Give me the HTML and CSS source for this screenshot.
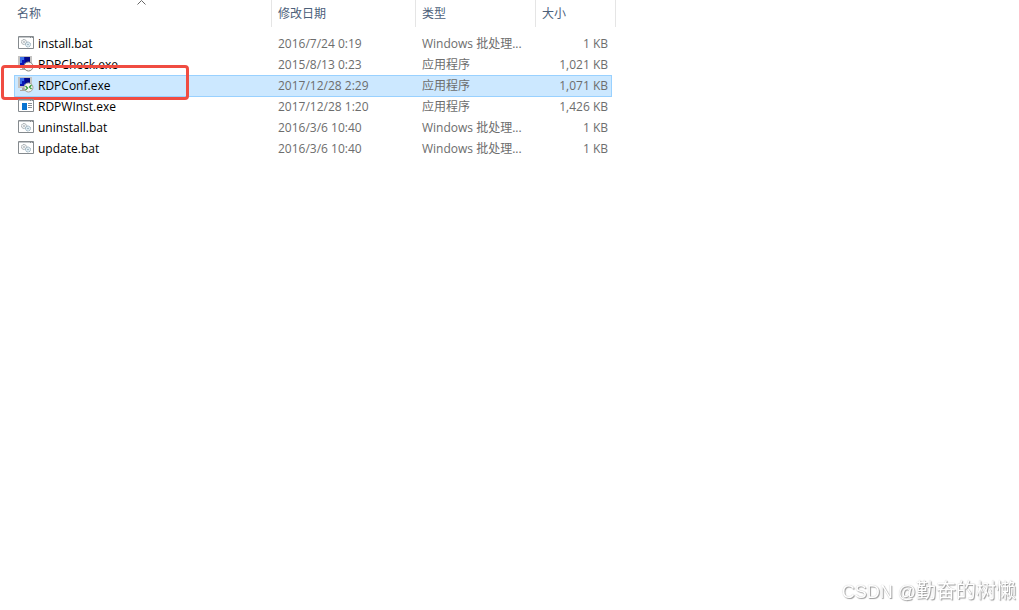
FILE: index.html
```
<!DOCTYPE html>
<html lang="zh-CN">
<head>
    <meta charset="UTF-8">
    <meta name="viewport" content="width=device-width, initial-scale=1.0">
    <title>RDPWrap</title>
    <link rel="stylesheet" href="styles.css">
</head>
<body>
    <!-- shared file icons -->
    <svg class="icon-defs" width="0" height="0" aria-hidden="true">
        <symbol id="icon-bat" viewBox="0 0 16 16">
            <path fill="#fff" stroke="#858a8e" d="M.5 1.500h15v12H.5z"/>
            <path fill="#c3c7ca" d="M1 2h14v1H1z"/>
            <path fill="#858a8e" d="M12 2h1v1h-1zM14 2h1v1h-1z"/>
            <circle cx="6" cy="7" r="2.500" fill="#f2f4f5" stroke="#8f979d" stroke-dasharray="1.2 .5"/>
            <circle cx="6" cy="7" r=".8" fill="#8f979d"/>
            <circle cx="10" cy="9.500" r="2.500" fill="#e5f0f6" stroke="#8da6b5" stroke-dasharray="1.2 .5"/>
            <circle cx="10" cy="9.500" r=".8" fill="#8da6b5"/>
        </symbol>
        <symbol id="icon-monitor" viewBox="0 0 16 16">
            <path fill="#c4c3c2" d="M0 0h14v11H0z"/>
            <path fill="#0a16b4" d="M2 1h10v8H2z"/>
            <path fill="#3b70e8" d="M2 1h4v3H4v3H2z"/>
            <path fill="#050a88" d="M7 1h5v5H7z"/>
            <path fill="#aaa79f" d="M4 11h5v2H4zM2 13h8v1H2z"/>
        </symbol>
        <symbol id="icon-check" viewBox="0 0 16 16">
            <use href="#icon-monitor"/>
            <circle cx="10.500" cy="10.500" r="4.500" fill="#f4f4f1" stroke="#85857f"/>
        </symbol>
        <symbol id="icon-conf" viewBox="0 0 16 16">
            <use href="#icon-monitor"/>
            <circle cx="10.500" cy="10.500" r="4.500" fill="#f4f4f1" stroke="#a2a29c"/>
            <path fill="none" stroke="#27962c" stroke-width="1.2" d="M7.500 9l2 2-2 2M13.500 8l-2 2 2 2"/>
        </symbol>
        <symbol id="icon-app" viewBox="0 0 16 16">
            <path fill="#fff" stroke="#858a8e" d="M.5 1.500h15v12H.5z"/>
            <path fill="#c3c7ca" d="M1 2h14v1H1z"/>
            <path fill="#858a8e" d="M12 2h1v1h-1zM14 2h1v1h-1z"/>
            <path fill="#0873d1" d="M4 5h5v7H4z"/>
            <path fill="#8b9095" d="M10 5h4v1h-4zM10 7h4v1h-4zM10 9h4v1h-4z"/>
        </symbol>
    </svg>

    <main class="explorer">
        <table class="file-list">
            <colgroup>
                <col class="col-name">
                <col class="col-date">
                <col class="col-type">
                <col class="col-size">
                <col class="col-end">
            </colgroup>
            <thead>
                <tr>
                    <th aria-sort="ascending">
                        名称
                        <svg class="sort-arrow" width="9" height="5" viewBox="0 0 9 5"><path fill="none" stroke="#666" d="M.5 4.500l4-4 4 4"/></svg>
                    </th>
                    <th>修改日期</th>
                    <th>类型</th>
                    <th colspan="2">大小</th>
                </tr>
            </thead>
            <tbody>
                <tr>
                    <td class="name"><div><svg class="icon"><use href="#icon-bat"/></svg>install.bat</div></td>
                    <td>2016/7/24 0:19</td>
                    <td>Windows 批处理...</td>
                    <td class="size">1 KB</td>
                </tr>
                <tr>
                    <td class="name"><div><svg class="icon"><use href="#icon-check"/></svg>RDPCheck.exe</div></td>
                    <td>2015/8/13 0:23</td>
                    <td>应用程序</td>
                    <td class="size">1,021 KB</td>
                </tr>
                <tr class="selected">
                    <td class="name"><div><svg class="icon"><use href="#icon-conf"/></svg>RDPConf.exe<span class="marker"></span></div></td>
                    <td>2017/12/28 2:29</td>
                    <td>应用程序</td>
                    <td class="size">1,071 KB</td>
                </tr>
                <tr>
                    <td class="name"><div><svg class="icon"><use href="#icon-app"/></svg>RDPWInst.exe</div></td>
                    <td>2017/12/28 1:20</td>
                    <td>应用程序</td>
                    <td class="size">1,426 KB</td>
                </tr>
                <tr>
                    <td class="name"><div><svg class="icon"><use href="#icon-bat"/></svg>uninstall.bat</div></td>
                    <td>2016/3/6 10:40</td>
                    <td>Windows 批处理...</td>
                    <td class="size">1 KB</td>
                </tr>
                <tr>
                    <td class="name"><div><svg class="icon"><use href="#icon-bat"/></svg>update.bat</div></td>
                    <td>2016/3/6 10:40</td>
                    <td>Windows 批处理...</td>
                    <td class="size">1 KB</td>
                </tr>
            </tbody>
        </table>
    </main>

    <div class="watermark"><span>CSDN @</span>勤奋的树懒</div>
</body>
</html>
```
FILE: styles.css
```
* { box-sizing: border-box; }
body {
    margin: 0;
    background: #fff;
    color: #6d6d6d;
    font: 12px/20px "Open Sans", "Noto Sans CJK SC", sans-serif;
}
.icon-defs { position: absolute; }
.explorer { padding-left: 14px; }

.file-list {
    table-layout: fixed;
    width: 602px;
    border-spacing: 0;
}
.col-name { width: 258px; }
.col-date { width: 144px; }
.col-type { width: 120px; }
.col-size { width: 76px; }
.col-end { width: 4px; }

th {
    position: relative;
    height: 27px;
    padding: 0 6px;
    border-right: 1px solid #e5e5e5;
    color: #4c607a;
    font-weight: normal;
    text-align: left;
}
th:first-child { padding-left: 3px; }
.sort-arrow {
    position: absolute;
    top: 0;
    left: 50%;
    margin-left: -6px;
}
tbody::before {
    content: "";
    display: block;
    height: 6px;
}
td {
    height: 21px;
    padding: 0 6px;
    border-top: 1px solid transparent;
    white-space: nowrap;
}
.size {
    padding-right: 4px;
    text-align: right;
}
.name {
    padding-left: 4px;
    color: #000;
}
.name div {
    position: relative;
    display: flex;
    align-items: center;
    gap: 4px;
}
.icon {
    width: 16px;
    height: 16px;
    margin-bottom: 2px;
}

.selected td {
    background: #cce8ff;
    border-top-color: #99d1ff;
    box-shadow: 0 1px #99d1ff;
}
.selected td:first-child { border-left: 1px solid #99d1ff; padding-left: 3px; }
.selected td:last-child { border-right: 1px solid #99d1ff; padding-right: 3px; }

/* red frame round the program to start */
.marker {
    position: absolute;
    top: -11px;
    left: -17px;
    width: 188px;
    height: 35px;
    border: 3px solid #f04c41;
    border-radius: 4px;
}

.watermark {
    position: fixed;
    right: 3px;
    bottom: 4px;
    color: #fff;
    font: 20px/28px "Liberation Sans", "Noto Sans CJK SC", sans-serif;
    text-shadow: 1px 1px 1px #999, 0 0 1px #bbb;
}
.watermark span { font-size: 18px; }
```
